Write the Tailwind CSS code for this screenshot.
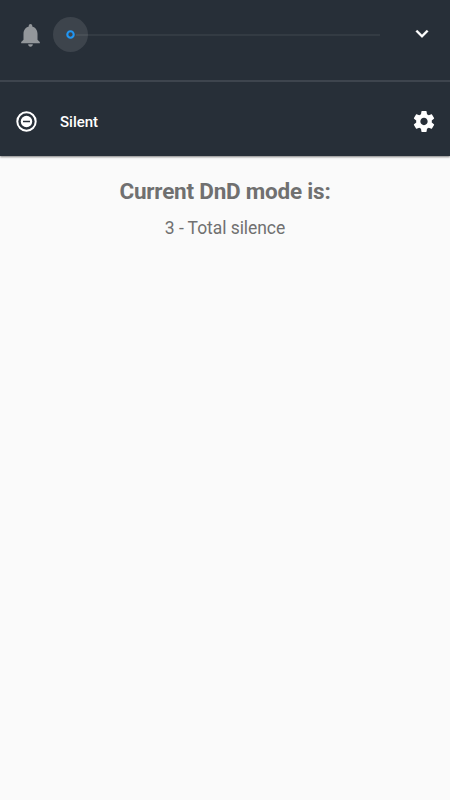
<!DOCTYPE html>
<html lang="en">
<head>
<meta charset="utf-8">
<title>DnD mode</title>
<script src="https://cdn.jsdelivr.net/npm/@tailwindcss/browser@4"></script>
</head>
<body class="bg-[#fafafa] font-[Roboto,sans-serif]">
<div class="flex h-[800px] w-[450px] flex-col overflow-hidden">
  <section class="flex h-[156px] flex-col bg-[#272f38] shadow-[0_1px_2px_rgba(0,0,0,0.5)]">
    <div class="flex h-[82px] items-start border-b-2 border-[#3e454e]">
      <svg class="mt-[21px] ml-[16px] h-[28px] w-[29px] shrink-0" viewBox="0 0 24 24" fill="#93979b"><path d="M12 22c1.1 0 2-.9 2-2h-4c0 1.100.9 2 2 2zm6-6v-5c0-3.070-1.640-5.640-4.500-6.320V4c0-.830-.670-1.500-1.500-1.500s-1.500.670-1.500 1.500v.680C7.630 5.360 6 7.920 6 11v5l-2 2v1h16v-1l-2-2z"/></svg>
      <div class="mt-[17px] ml-[8px] flex h-[35px] w-[327px] items-center">
        <div class="flex size-[35px] shrink-0 items-center justify-center rounded-full bg-[#3d444c]">
          <svg class="size-[9px]" viewBox="0 0 9 9"><circle cx="4.500" cy="4.500" r="3.200" fill="none" stroke="#2196f3" stroke-width="2.100"/></svg>
        </div>
        <div class="-ml-[12px] h-[2px] grow bg-white/6"></div>
      </div>
      <svg class="mt-[21px] ml-[29px] h-[25px] w-[26px] shrink-0" viewBox="0 0 24 24" fill="#fff" stroke="#fff" stroke-width=".3"><path d="M16.590 8.590L12 13.170 7.410 8.590 6 10l6 6 6-6z"/></svg>
    </div>
    <div class="flex h-[74px] items-center pt-[5px] pr-[13px] pl-[16px]">
      <svg class="size-[21px]" viewBox="0 0 21 21"><circle cx="10.500" cy="10.500" r="9.200" fill="none" stroke="#fff" stroke-width="2"/><circle cx="10.500" cy="10.500" r="5.700" fill="#fff"/><path d="M7 10.500h7" stroke="#272f38" stroke-width="1.500"/></svg>
      <span class="ml-[23px] text-[15px] leading-5 font-medium text-white">Silent</span>
      <svg class="ml-auto h-[25px] w-[26px]" viewBox="0 0 24 24" fill="#fff"><path d="M19.430 12.980c.040-.320.070-.640.070-.980s-.030-.660-.070-.980l2.110-1.650c.190-.150.240-.420.120-.640l-2-3.460c-.120-.220-.390-.300-.610-.220l-2.490 1c-.520-.400-1.080-.730-1.690-.980l-.380-2.650C14.460 2.180 14.250 2 14 2h-4c-.250 0-.460.180-.490.420l-.380 2.650c-.610.250-1.170.590-1.690.980l-2.490-1c-.230-.090-.490 0-.610.220l-2 3.460c-.130.220-.070.490.120.640l2.110 1.650c-.040.320-.070.650-.070.980s.030.660.070.980l-2.110 1.650c-.190.150-.240.420-.120.640l2 3.460c.120.220.390.300.610.220l2.490-1c.520.400 1.080.730 1.690.980l.380 2.650c.030.240.240.420.490.420h4c.250 0 .460-.180.490-.420l.380-2.650c.610-.250 1.170-.590 1.690-.980l2.490 1c.230.090.490 0 .610-.220l2-3.460c.120-.220.070-.490-.120-.640l-2.110-1.650zM12 15.500c-1.930 0-3.500-1.570-3.500-3.500s1.570-3.500 3.500-3.500 3.500 1.570 3.500 3.500-1.570 3.500-3.500 3.500z"/></svg>
    </div>
  </section>
  <main class="flex flex-col items-center pt-[21px] text-[#707070]">
    <h1 class="text-[22.5px] leading-7 font-bold tracking-[-0.22px]">Current DnD mode is:</h1>
    <p class="mt-[11px] text-[17.5px] leading-6 tracking-[-0.06px]">3 - Total silence</p>
  </main>
</div>
</body>
</html>
